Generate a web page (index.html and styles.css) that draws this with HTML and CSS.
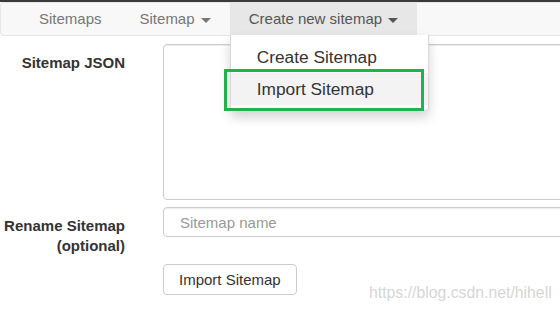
FILE: index.html
```html
<!DOCTYPE html>
<html>
<head>
<meta charset="utf-8">
<link rel="stylesheet" href="styles.css">
</head>
<body>
<div class="page">
<div class="topline"></div>
<nav class="navbar">
  <ul class="nav">
    <li class="nav-item"><a class="nav-link">Sitemaps</a></li>
    <li class="nav-item"><a class="nav-link">Sitemap <span class="caret"></span></a></li>
    <li class="nav-item open">
      <a class="nav-link active">Create new sitemap <span class="caret"></span></a>
      <ul class="dropdown">
        <li class="dropdown-item">Create Sitemap</li>
        <li class="dropdown-item hover">Import Sitemap<span class="highlight-box"></span></li>
      </ul>
    </li>
  </ul>
</nav>
<form class="form">
  <label class="label">Sitemap JSON</label>
  <textarea class="textarea"></textarea>
  <label class="label">Rename Sitemap<br>(optional)</label>
  <input class="input" type="text" placeholder="Sitemap name">
  <span></span>
  <div><button class="btn" type="button">Import Sitemap</button></div>
</form>
<div class="watermark">https://blog.csdn.net/hihell</div>
</div>
</body>
</html>
```
FILE: styles.css
```css
html, body {
  margin: 0;
  padding: 0;
  overflow: hidden;
  background: #fff;
  font-family: "Liberation Sans", Arial, sans-serif;
}
.page {
  position: relative;
  width: 560px;
  height: 311px;
  overflow: hidden;
}
.topline {
  height: 2px;
  background: #3a3a3a;
}
.navbar {
  background: #f8f8f8;
  border: 1px solid #e7e7e7;
  border-right: none;
  border-radius: 4px 0 0 4px;
  height: 32px;
  position: relative;
  z-index: 5;
}
.nav {
  list-style: none;
  margin: 0;
  padding: 0 0 0 19px;
  display: flex;
}
.nav-item { position: relative; }
.nav-link {
  display: block;
  padding: 6px 19px;
  line-height: 20px;
  font-size: 15px;
  color: #777;
}
.nav-link.active {
  background: #e7e7e7;
  color: #555;
}
.caret {
  display: inline-block;
  width: 0;
  height: 0;
  margin-left: 2px;
  vertical-align: middle;
  border-top: 5px solid;
  border-left: 5px solid transparent;
  border-right: 5px solid transparent;
}
.dropdown {
  position: absolute;
  left: 0;
  top: 100%;
  box-sizing: border-box;
  width: 199px;
  margin: 0;
  padding: 6px 0 5px;
  list-style: none;
  background: #fff;
  border: 1px solid rgba(0,0,0,.15);
  border-top: none;
  border-radius: 0 0 4px 4px;
  box-shadow: 0 6px 12px rgba(0,0,0,.175);
}
.dropdown-item {
  position: relative;
  padding: 4px 0 4px 26px;
  line-height: 24px;
  font-size: 17.3px;
  color: #333;
  white-space: nowrap;
}
.dropdown-item.hover { background: #f3f3f3; }
.highlight-box {
  position: absolute;
  left: -7px;
  top: -4px;
  width: 200px;
  height: 42px;
  box-sizing: border-box;
  border: 3px solid #22b14c;
}
.form {
  display: grid;
  grid-template-columns: 125px 1fr;
  column-gap: 38px;
  margin-top: 8px;
  margin-right: -12px;
}
.label {
  font-size: 15px;
  font-weight: bold;
  line-height: 20px;
  color: #333;
  text-align: right;
  padding-top: 9px;
  white-space: nowrap;
}
.textarea, .input {
  box-sizing: border-box;
  width: 100%;
  border: 1px solid #ccc;
  border-radius: 4px;
  box-shadow: inset 0 1px 1px rgba(0,0,0,.075);
  font-family: inherit;
  font-size: 15px;
  margin: 0;
}
.textarea {
  height: 156px;
  resize: none;
  margin-bottom: 7px;
}
.input {
  height: 30px;
  padding: 0 16px;
  align-self: start;
}
.input::placeholder { color: #999; }
.btn {
  margin-top: 8px;
  height: 31px;
  padding: 0 15px;
  background: #fff;
  border: 1px solid #ccc;
  border-radius: 4px;
  font-family: inherit;
  font-size: 15px;
  color: #333;
}
.watermark {
  position: absolute;
  left: 369px;
  top: 285px;
  font-size: 15.8px;
  line-height: 1;
  color: #d6d6d6;
  white-space: nowrap;
}
```
